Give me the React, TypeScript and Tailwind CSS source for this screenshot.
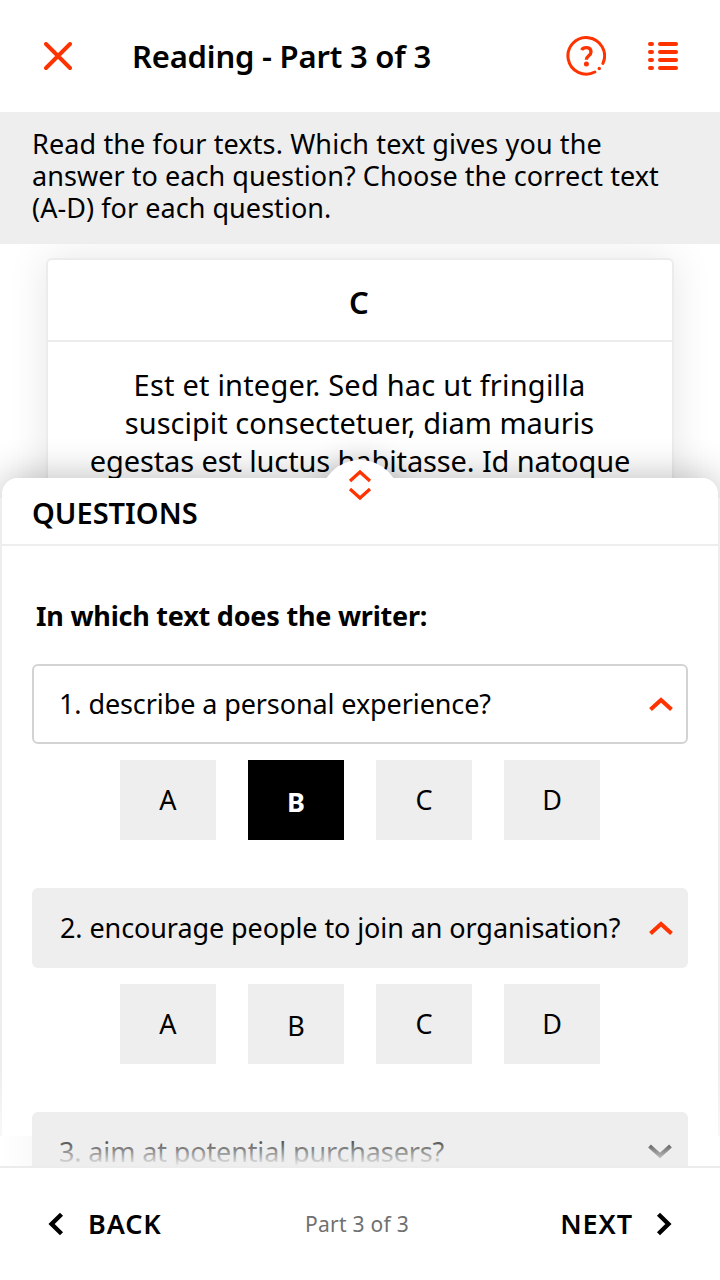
import type { ReactNode } from "react";

const RED = "#ff3300";

function Chevron({ d, color, width, height, stroke = 4.1 }: { d: string; color: string; width: number; height: number; stroke?: number }) {
  return (
    <svg width={width} height={height} viewBox={`0 0 ${width} ${height}`} fill="none" stroke={color} strokeWidth={stroke} className="shrink-0">
      <path d={d} />
    </svg>
  );
}

function Answer({ letter, selected = false }: { letter: string; selected?: boolean }) {
  return (
    <button
      className={
        "flex h-20 w-24 items-center justify-center text-[27px] leading-8 " +
        (letter === "B" ? "pt-1 " : "") +
        (selected ? "bg-black font-bold text-white" : "bg-[#eeeeee]")
      }
    >
      {letter}
    </button>
  );
}

function Question({ children, answer, outlined = false, textClass }: { children: ReactNode; answer?: string; outlined?: boolean; textClass: string }) {
  return (
    <section className="mb-12">
      <div
        className={
          "flex h-20 items-center justify-between rounded-[6px] " +
          (outlined ? "border-2 border-[#d3d3d3] pr-3 " : "bg-[#eeeeee] pr-[14px] ") +
          textClass
        }
      >
        <span className="text-[27px] leading-8 whitespace-nowrap">{children}</span>
        <Chevron d="M2.5 13.5 L13 4 L23.5 13.5" color={RED} width={26} height={16} />
      </div>
      <div className="mt-4 flex justify-center gap-8">
        {["A", "B", "C", "D"].map((letter) => (
          <Answer key={letter} letter={letter} selected={letter === answer} />
        ))}
      </div>
    </section>
  );
}

export default function App() {
  return (
    <div className="relative flex h-[1280px] w-[720px] flex-col overflow-hidden bg-white font-['Noto_Sans',sans-serif] text-black">
      <header className="flex h-28 shrink-0 items-center pr-[41px] pl-11">
        <svg width="28" height="28" viewBox="0 0 28 28" stroke={RED} strokeWidth="3.9" strokeLinecap="round">
          <path d="M2 2 L26 26 M26 2 L2 26" />
        </svg>
        <h1 className="ml-[60px] text-[31px] leading-10 font-semibold tracking-[-0.2px] whitespace-nowrap">Reading - Part 3 of 3</h1>
        <svg width="40" height="40" viewBox="0 0 40 40" className="ml-auto" fill="none">
          <path d="M36.9 27.4 A18.3 18.3 0 1 0 28.8 36" stroke={RED} strokeWidth="3" strokeLinecap="round" />
          <path d="M15.6 14 C17.4 10.7 25 10.4 25 15.9 C25 19.8 20.4 19.8 20.3 23.8" stroke={RED} strokeWidth="3.3" />
          <circle cx="20.4" cy="27.9" r="2.5" fill={RED} />
          <circle cx="33.3" cy="32.5" r="1.7" fill={RED} />
        </svg>
        <svg width="31" height="28" viewBox="0 0 31 28" className="ml-[42px]" stroke={RED} strokeWidth="4" strokeLinecap="round">
          <path d="M2 2H4M12 2H28M2 10H4M12 10H28M2 18H4M12 18H28M2 26H4M12 26H28" />
        </svg>
      </header>

      <div className="h-[132px] shrink-0 bg-[#eeeeee] pt-4 pl-8 text-[27px] leading-8 whitespace-nowrap">
        <p className="tracking-[0.12px]">Read the four texts. Which text gives you the</p>
        <p className="tracking-[0.055px]">answer to each question? Choose the correct text</p>
        <p className="tracking-[0.05px]">(A-D) for each question.</p>
      </div>

      <main className="h-[234px] shrink-0 overflow-hidden px-[46px] pt-[14px]">
        <article className="h-[400px] rounded-[6px] border-2 border-[#ececec] bg-white text-center shadow-[0_0_40px_rgba(0,0,0,0.1)]">
          <h2 className="h-[82px] border-b-2 border-[#ececec] pt-[22px] pr-0.5 text-[31px] leading-10 font-semibold">C</h2>
          <div className="pt-6 text-[29px] leading-[38px] whitespace-nowrap">
            <p className="pr-px tracking-[0.2px]">Est et integer. Sed hac ut fringilla</p>
            <p className="pr-px tracking-[0.005px]">suscipit consectetuer, diam mauris</p>
            <p className="tracking-[-0.12px]">egestas est luctus habitasse. Id natoque</p>
          </div>
        </article>
      </main>

      <div className="relative h-[658px] shrink-0">
        <div className="absolute top-[-18px] left-[320px] h-20 w-20 rounded-full shadow-[0_0_30px_rgba(0,0,0,0.2)]" />
        <div className="absolute inset-x-0.5 top-0 h-14 rounded-t-2xl shadow-[0_-2px_36px_rgba(0,0,0,0.25)]" />
        <div className="absolute top-[-18px] left-[320px] h-20 w-20 rounded-full bg-white" />
        <div className="absolute inset-x-0 top-5 bottom-0 bg-linear-to-b from-[#eeeeee] from-90% to-[#f8f8f8]" />
        <div className="relative mx-0.5 h-full rounded-t-2xl bg-white">
          <div className="flex h-[68px] items-center border-b-2 border-[#eeeeee] pt-1 pl-[30px]">
            <h2 className="text-[29px] leading-10 font-semibold">QUESTIONS</h2>
          </div>
          <div className="px-[30px] pt-[54px]">
            <h3 className="mb-8 pl-1 text-[27px] leading-8 font-bold tracking-[-0.22px] whitespace-nowrap">In which text does the writer:</h3>
            <Question outlined answer="B" textClass="pl-[25px] tracking-[-0.1px]">1. describe a personal experience?</Question>
            <Question textClass="pl-7 tracking-[-0.09px]">2. encourage people to join an organisation?</Question>
          </div>
        </div>
        <div className="absolute top-[-10px] left-[348px] flex flex-col gap-1">
          <Chevron d="M2 13 L12 4 L22 13" color={RED} width={24} height={15} stroke={3.2} />
          <Chevron d="M2 2 L12 11 L22 2" color={RED} width={24} height={15} stroke={3.2} />
        </div>
      </div>

      <div className="h-[30px] shrink-0 bg-linear-to-r from-white via-[#f4f4f4] via-10% to-white" />

      <div className="absolute inset-x-0 top-[1112px] h-[54px] overflow-hidden">
        <div className="mx-8 flex h-20 items-center justify-between rounded-[6px] bg-[#eeeeee] pr-[15px] pl-[27px]">
          <span className="text-[27px] leading-8 tracking-[-0.126px] whitespace-nowrap">3. aim at potential purchasers?</span>
          <Chevron d="M2.5 3 L13 12.5 L23.5 3" color="#000000" width={26} height={18} />
        </div>
        <div className="absolute inset-x-8 top-0 h-full rounded-t-[6px] bg-linear-to-b from-[#ebebeb]/0 from-30% to-[#eeeeee]" />
      </div>

      <footer className="relative flex h-[114px] shrink-0 items-center justify-between border-t-2 border-[#ececec] bg-white px-12">
        <button className="flex items-center text-[27px] font-semibold tracking-[0.9px]">
          <Chevron d="M13.5 2.3 L3.6 12 L13.5 21.7" color="#000000" width={16} height={24} stroke={4.4} />
          <span className="ml-6">BACK</span>
        </button>
        <span className="mr-2 pt-px text-[21px] tracking-[0.25px] text-[#707070]">Part 3 of 3</span>
        <button className="flex items-center text-[27px] font-semibold tracking-[0.9px]">
          <span className="mr-[23px]">NEXT</span>
          <Chevron d="M2.5 2.3 L12.4 12 L2.5 21.7" color="#000000" width={16} height={24} stroke={4.4} />
        </button>
      </footer>
    </div>
  );
}
